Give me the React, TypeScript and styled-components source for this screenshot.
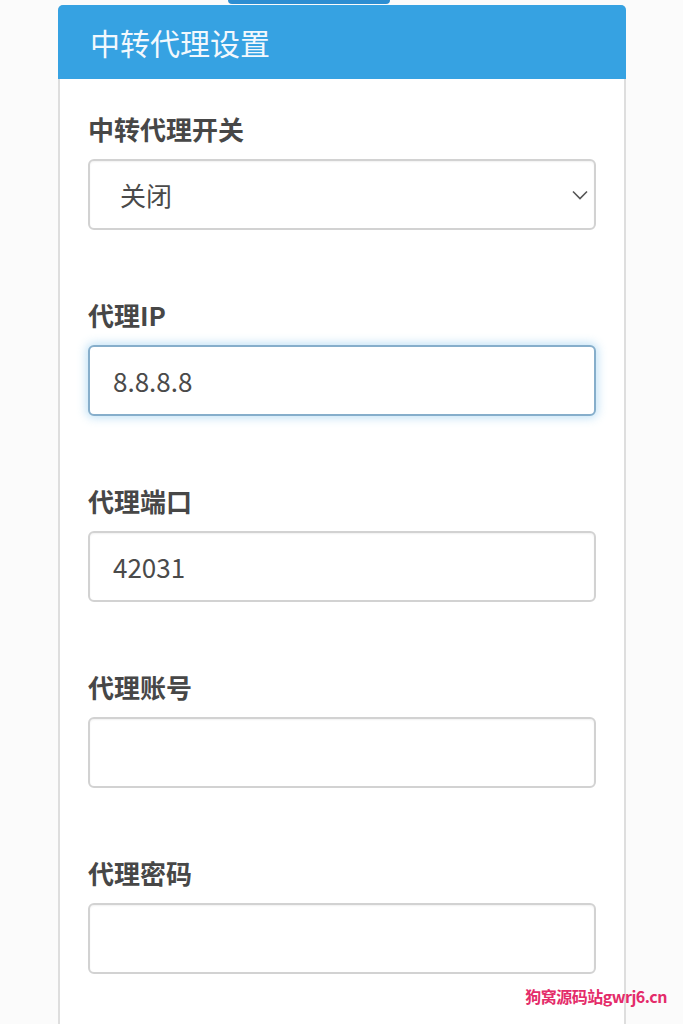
import React from 'react';
import styled, { createGlobalStyle } from 'styled-components';

const GlobalStyle = createGlobalStyle`
  html, body {
    margin: 0;
    padding: 0;
    background: #fbfbfb;
    font-family: "Noto Sans CJK SC", "Noto Sans", Roboto, sans-serif;
  }
`;

const Page = styled.div`
  position: relative;
  width: 683px;
  height: 1024px;
  overflow: hidden;
  padding: 5px 57px 0 58px;
  box-sizing: border-box;
`;

const TopTab = styled.div`
  position: absolute;
  top: 0;
  left: 228px;
  width: 162px;
  height: 4px;
  background: #2d8ed2;
  border-radius: 0 0 5px 5px;
`;

const Card = styled.div`
  background: #fff;
  border: 2px solid #dedede;
  border-bottom: none;
  border-radius: 5px 5px 0 0;
  min-height: 1030px;
`;

const CardHeader = styled.div`
  background: #36a2e2;
  height: 74px;
  margin: -2px -2px 0;
  border-radius: 5px 5px 0 0;
  display: flex;
  align-items: center;
  padding-left: 32px;
  color: #f2f8fd;
  font-size: 30px;
`;

const CardBody = styled.div`
  padding: 35px 28px 0 28px;
  display: flex;
  flex-direction: column;
  gap: 70px;
`;

const Field = styled.div`
  display: flex;
  flex-direction: column;
`;

const Label = styled.label`
  font-size: 26px;
  font-weight: 700;
  color: #474747;
  line-height: 30px;
  margin-bottom: 15px;
`;

const Control = styled.div<{ $focused?: boolean }>`
  position: relative;
  height: 71px;
  box-sizing: border-box;
  border: 2px solid ${(p) => (p.$focused ? '#86aecb' : '#d2d2d2')};
  border-radius: 6px;
  background: #fff;
  display: flex;
  align-items: center;
  padding-left: 23px;
  font-size: 26px;
  color: #4a4a4a;
  box-shadow: ${(p) =>
    p.$focused
      ? '0 0 10px 2px rgba(120, 190, 235, 0.45)'
      : 'inset 0 1px 2px rgba(0, 0, 0, 0.06)'};
`;

const SelectText = styled.span`
  padding-left: 7px;
  flex: 1;
`;

const Chevron = styled.svg`
  margin-right: 6px;
`;

const Watermark = styled.div`
  position: absolute;
  right: 16px;
  bottom: 16px;
  font-size: 16px;
  font-weight: 700;
  color: #e42c6a;
  letter-spacing: -0.5px;
`;

const fields = [
  { label: '代理IP', value: '8.8.8.8', focused: true },
  { label: '代理端口', value: '42031' },
  { label: '代理账号', value: '' },
  { label: '代理密码', value: '' },
];

export default function App() {
  return (
    <>
      <GlobalStyle />
      <Page>
        <TopTab />
        <Card>
          <CardHeader>中转代理设置</CardHeader>
          <CardBody>
            <Field>
              <Label>中转代理开关</Label>
              <Control>
                <SelectText>关闭</SelectText>
                <Chevron width="16" height="10" viewBox="0 0 16 10">
                  <path d="M1 1.5 L8 8.5 L15 1.5" fill="none" stroke="#555" strokeWidth="1.6" />
                </Chevron>
              </Control>
            </Field>
            {fields.map((f) => (
              <Field key={f.label}>
                <Label>{f.label}</Label>
                <Control $focused={f.focused}>{f.value}</Control>
              </Field>
            ))}
          </CardBody>
        </Card>
        <Watermark>狗窝源码站gwrj6.cn</Watermark>
      </Page>
    </>
  );
}
